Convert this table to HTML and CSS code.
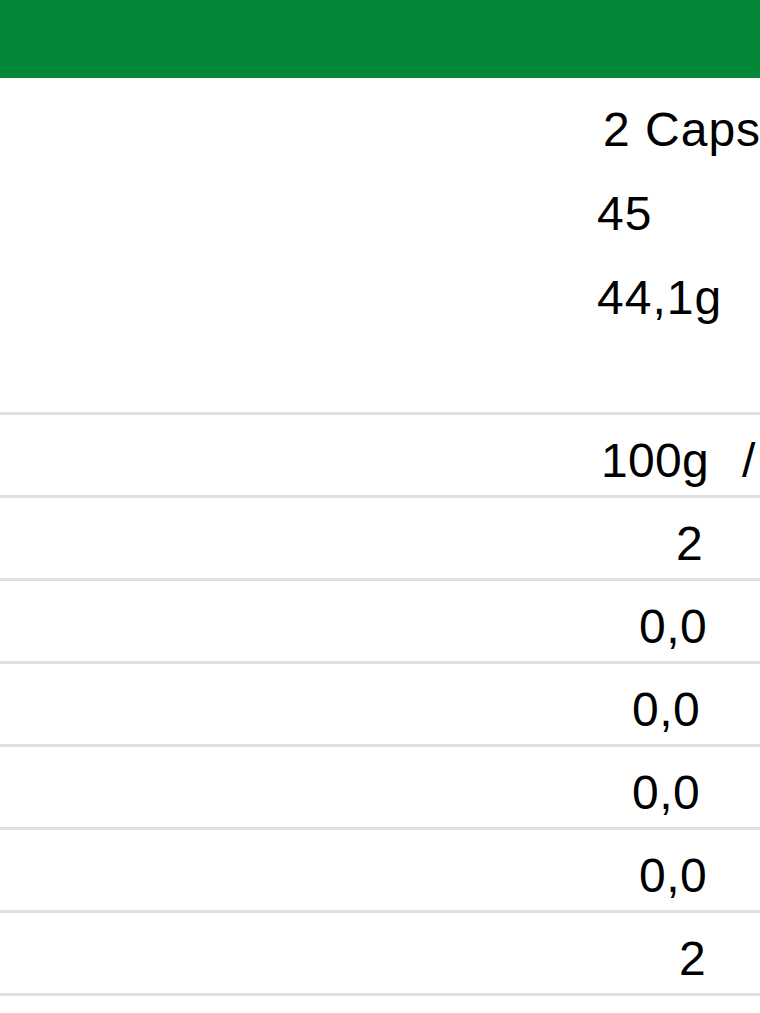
FILE: index.html
```html
<!DOCTYPE html>
<html lang="pt">
<head>
<meta charset="utf-8">
<title>Informação Nutricional</title>
<link rel="stylesheet" href="styles.css">
</head>
<body>
<div class="topbar"></div>
<section class="info">
  <div class="info-row"><span class="label"></span><span class="value value--indent">2 Caps</span></div>
  <div class="info-row"><span class="label"></span><span class="value">45</span></div>
  <div class="info-row"><span class="label"></span><span class="value">44,1g</span></div>
</section>
<table class="nutri">
  <tbody>
    <tr class="head"><td class="name"></td><td class="amount"><span class="col-head">100g</span><span class="sep">/</span></td></tr>
    <tr><td class="name"></td><td class="amount"><span class="num num--two">2</span></td></tr>
    <tr><td class="name"></td><td class="amount"><span class="num num--wide">0,0</span></td></tr>
    <tr><td class="name"></td><td class="amount"><span class="num num--wider">0,0</span></td></tr>
    <tr><td class="name"></td><td class="amount"><span class="num num--wider">0,0</span></td></tr>
    <tr><td class="name"></td><td class="amount"><span class="num num--wide">0,0</span></td></tr>
    <tr><td class="name"></td><td class="amount"><span class="num num--two2">2</span></td></tr>
  </tbody>
</table>
</body>
</html>
```

FILE: styles.css
```css
html, body {
  margin: 0;
  padding: 0;
  background: #ffffff;
}

body {
  width: 760px;
  overflow: hidden;
  font-family: "Liberation Sans", Arial, sans-serif;
  font-size: 48px;
  color: #000;
}

.topbar {
  height: 78px;
  background: #038837;
}

.info {
  padding-top: 24px;
  padding-bottom: 58px;
}

.info-row {
  display: grid;
  grid-template-columns: 597px 1fr;
  height: 84px;
  line-height: 56px;
  white-space: nowrap;
  letter-spacing: 1px;
}

.value--indent {
  padding-left: 6px;
}

.nutri {
  width: 760px;
  border-collapse: collapse;
  table-layout: fixed;
}

.nutri td {
  border-top: 3px solid #e0e0e0;
  border-bottom: 3px solid #e0e0e0;
  height: 80px;
  box-sizing: border-box;
  padding: 18px 0 6px 0;
  line-height: 56px;
  vertical-align: top;
  white-space: nowrap;
  overflow: hidden;
}

.nutri tr {
  height: 83px;
}

.nutri .name {
  width: 597px;
}

.col-head {
  padding-left: 4px;
  letter-spacing: 0.3px;
}

.sep {
  margin-left: 33px;
}

.num {
  display: inline-block;
  letter-spacing: 0.5px;
}

.num--two { padding-left: 79px; }
.num--two2 { padding-left: 82px; }
.num--wide { padding-left: 42px; }
.num--wider { padding-left: 35px; }
```
